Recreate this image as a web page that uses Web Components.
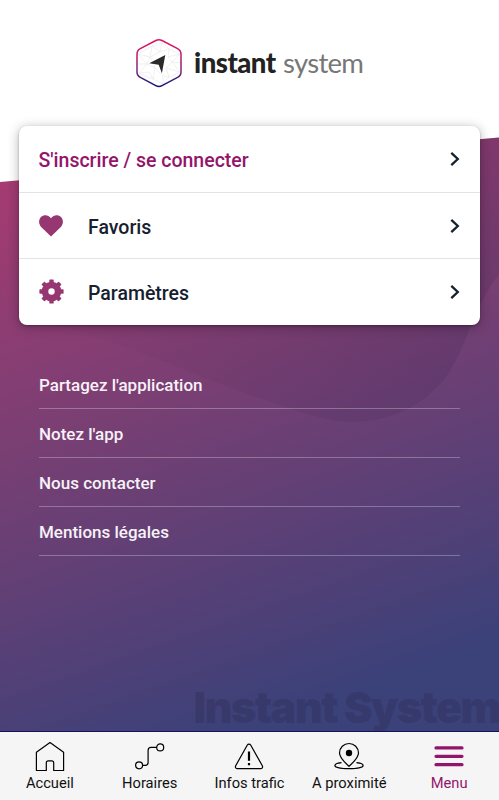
<!DOCTYPE html>
<html lang="fr">
<head>
<meta charset="utf-8">
<title>Menu</title>
<style>
    body {
        margin: 0;
        font-family: Roboto, sans-serif;
    }
</style>
</head>
<body>
<app-screen>
    <brand-logo slot="header"></brand-logo>
    <menu-card>
        <menu-row accent>S'inscrire / se connecter</menu-row>
        <menu-row icon="heart">Favoris</menu-row>
        <menu-row icon="gear">Paramètres</menu-row>
    </menu-card>
    <link-list>
        <link-item>Partagez l'application</link-item>
        <link-item>Notez l'app</link-item>
        <link-item>Nous contacter</link-item>
        <link-item>Mentions légales</link-item>
    </link-list>
    <water-mark slot="footer">Instant System</water-mark>
    <tab-bar slot="tabs">
        <tab-item icon="home">Accueil</tab-item>
        <tab-item icon="route">Horaires</tab-item>
        <tab-item icon="alert">Infos trafic</tab-item>
        <tab-item icon="pin">A proximité</tab-item>
        <tab-item icon="menu" active>Menu</tab-item>
    </tab-bar>
</app-screen>

<script>
const ICONS = {
    heart: /*html*/ `
        <svg width="24" height="24" viewBox="0 0 24 24" fill="#963772">
            <path d="M12 22.600 2.400 13.200C-.6 10.200-.6 5.600 2 3 4.700.400 9.300.500 12 4.200 14.700.500 19.300.400 22 3c2.600 2.600 2.600 7.200-.4 10.200Z"/>
        </svg>`,
    gear: /*html*/ `
        <svg width="25" height="25" viewBox="-12.500 -12.500 25 25" fill="#963772">
            <rect x="-2.200" y="-12.100" width="4.400" height="24.200" rx=".7"/>
            <rect x="-2.200" y="-12.100" width="4.400" height="24.200" rx=".7" transform="rotate(45)"/>
            <rect x="-2.200" y="-12.100" width="4.400" height="24.200" rx=".7" transform="rotate(90)"/>
            <rect x="-2.200" y="-12.100" width="4.400" height="24.200" rx=".7" transform="rotate(135)"/>
            <circle r="9.800"/>
            <circle r="3.200" fill="#fff"/>
        </svg>`,
    home: /*html*/ `
        <svg width="30" height="32" viewBox="0 0 30 32" fill="none" stroke="#000" stroke-width="1.200" stroke-linejoin="round">
            <path d="M1.400 11.200 15 1.500l13.600 9.700v18.300H18.700v-7.700c0-1.400-.6-2-2-2h-3.400c-1.400 0-2 .6-2 2v7.700H1.400Z"/>
        </svg>`,
    route: /*html*/ `
        <svg width="30" height="32" viewBox="0 0 30 32" fill="none" stroke="#000" stroke-width="1.200">
            <circle cx="25.200" cy="6.400" r="3.500"/>
            <circle cx="4.100" cy="24.300" r="3.500"/>
            <path d="M21.700 6.400H16c-2 0-2.900.9-2.900 2.900v12.200c0 2-.9 2.800-2.800 2.800H7.600"/>
        </svg>`,
    alert: /*html*/ `
        <svg width="30" height="32" viewBox="0 0 30 32" fill="none" stroke="#000" stroke-width="1.200">
            <path d="M13.200 4.200c.9-1.500 2.700-1.500 3.600 0l11.500 20.500c.8 1.500 0 2.900-1.800 2.900h-23c-1.800 0-2.600-1.400-1.800-2.900Z"/>
            <path d="M15 10.500v9.300M15 22v2.300" stroke-width="2.200"/>
        </svg>`,
    pin: /*html*/ `
        <svg width="30" height="32" viewBox="0 0 30 32" fill="none" stroke="#000" stroke-width="1.200">
            <path d="M15 25.300C11 21.700 5.500 16.800 5.500 12a9.500 9.500 0 0 1 19 0c0 4.800-5.500 9.700-9.500 13.300Z"/>
            <circle cx="15" cy="12" r="3.200" fill="#000" stroke="none"/>
            <path d="M7.500 21.700C3.800 22.100.9 23 .9 24.400c0 1.900 6.300 3.200 14.100 3.200s14.100-1.300 14.100-3.200c0-1.400-2.900-2.300-6.600-2.700"/>
        </svg>`,
    menu: /*html*/ `
        <svg width="30" height="32" viewBox="0 0 30 32" stroke="#93156b" stroke-width="3.200" stroke-linecap="round">
            <path d="M2 6.900h26M2 15.300h26M2 23.700h26"/>
        </svg>`
}

class AppScreen extends HTMLElement {
    constructor() {
        super()
        this.attachShadow({ mode: 'open' }).innerHTML = /*html*/ `
            <style>
                :host {
                    display: flex;
                    flex-direction: column;
                    position: relative;
                    z-index: 0;
                    height: 800px;
                    overflow: hidden;
                    background: #fff;
                }
                .backdrop {
                    position: absolute;
                    inset: 0;
                    z-index: -1;
                }
                header {
                    height: 125.500px;
                    box-sizing: border-box;
                    padding: 37px 0 0 134px;
                }
                main {
                    flex: 1;
                    padding: 0 19px;
                }
            </style>
            <svg class="backdrop" width="499" height="800" viewBox="0 0 499 800">
                <defs>
                    <linearGradient id="bg" gradientUnits="userSpaceOnUse" x1="0" y1="183" x2="200" y2="746">
                        <stop offset="0" stop-color="#a53b72"/>
                        <stop offset=".43" stop-color="#793f73"/>
                        <stop offset="1" stop-color="#3b4179"/>
                    </linearGradient>
                    <linearGradient id="wave" x1="0" y1="0" x2="1" y2="0">
                        <stop offset="0" stop-color="#3c2350" stop-opacity="0"/>
                        <stop offset="1" stop-color="#3c2350" stop-opacity=".2"/>
                    </linearGradient>
                </defs>
                <path d="M0 182 499 137.500V800H0Z" fill="url(#bg)"/>
                <path d="M0 313C85 325 170 366 250 395 290 408 322 422 353 422 390 422 428 405 450 371 468 342 478 298 499 275V137.500L0 182Z" fill="url(#wave)"/>
            </svg>
            <header><slot name="header"></slot></header>
            <main><slot></slot></main>
            <slot name="footer"></slot>
            <slot name="tabs"></slot>
        `
    }
}

class BrandLogo extends HTMLElement {
    constructor() {
        super()
        this.attachShadow({ mode: 'open' }).innerHTML = /*html*/ `
            <style>
                :host {
                    display: grid;
                    grid-template-columns: 60px 89px auto;
                    align-items: center;
                    font-family: Lato, sans-serif;
                    font-size: 27.500px;
                    line-height: 52px;
                    color: #777;
                }
                b {
                    color: #222;
                    font-weight: 900;
                    letter-spacing: -.5px;
                }
                span {
                    letter-spacing: -.7px;
                }
            </style>
            <svg width="50" height="52" viewBox="0 0 50 52" fill="none">
                <defs>
                    <linearGradient id="edge" x1="0" y1="0" x2="0" y2="1">
                        <stop offset="0" stop-color="#e3125f"/>
                        <stop offset=".35" stop-color="#bd1766"/>
                        <stop offset=".65" stop-color="#792a7b"/>
                        <stop offset="1" stop-color="#161078"/>
                    </linearGradient>
                </defs>
                <path d="M4 17 18 9 28 6 35 12 46 17 38 25 46 35 35 40 29 47 19 42 5 36 13 27ZM4 17 16 20 13 27 3 27M18 9 16 20 26 15 35 12 34 20 38 25M26 15 18 9M26 15 28 6M16 20 21 31 13 27M19 42 21 31 29 39 35 40M5 36 15 35 19 42M29 39 29 47M38 25 32 31 35 40M34 20 46 17M38 25 47 26M32 31 46 35" stroke="#e9e9e9" stroke-width=".7"/>
                <path d="M21.800 3.500c2-1.100 4.200-1.100 6.200 0l15.600 8.200c2.300 1.200 3.400 3 3.400 5.500V35c0 2.500-1.100 4.200-3.400 5.400L28 48.700c-2 1.100-4.200 1.100-6.200 0L6.300 40.400C4 39.200 3 37.500 3 35V17.200c0-2.500 1-4.300 3.300-5.500Z" stroke="url(#edge)" stroke-width="1.500"/>
                <path d="M31.300 18 15.200 26.200 24.700 27.800 27.900 36.300Z" fill="#292929"/>
            </svg>
            <b>instant</b><span>system</span>
        `
    }
}

class MenuCard extends HTMLElement {
    constructor() {
        super()
        this.attachShadow({ mode: 'open' }).innerHTML = /*html*/ `
            <style>
                :host {
                    display: block;
                    border-radius: 8px;
                    background: #fff;
                    box-shadow: 0 2px 12px rgba(0, 0, 0, .3), 0 1px 2px rgba(40, 0, 40, .3);
                }
                ::slotted(menu-row:not(:first-child)) {
                    border-top: 1px solid #e3e3e3;
                }
            </style>
            <slot></slot>
        `
    }
}

class MenuRow extends HTMLElement {
    constructor() {
        super()
        const icon = this.getAttribute('icon')
        this.attachShadow({ mode: 'open' }).innerHTML = /*html*/ `
            <style>
                :host {
                    display: flex;
                    align-items: center;
                    box-sizing: border-box;
                    height: 66.400px;
                    padding: 0 19px 0 19.500px;
                    font-size: 19.500px;
                    font-weight: 500;
                    color: #17202f;
                }
                :host([accent]) {
                    color: #93156b;
                }
                .icon {
                    display: flex;
                    width: 49.500px;
                }
                .label {
                    flex: 1;
                    padding-top: 3px;
                }
            </style>
            ${icon ? `<span class="icon">${ICONS[icon]}</span>` : ''}
            <span class="label"><slot></slot></span>
            <svg width="12" height="16" viewBox="0 0 12 16" fill="none" stroke="#17202f" stroke-width="2.300">
                <path d="M2.300 1.900 8.800 8 2.300 14.100"/>
            </svg>
        `
    }
}

class LinkList extends HTMLElement {
    constructor() {
        super()
        this.attachShadow({ mode: 'open' }).innerHTML = /*html*/ `
            <style>
                :host {
                    display: block;
                    padding: 35.500px 20px 0;
                }
            </style>
            <slot></slot>
        `
    }
}

class LinkItem extends HTMLElement {
    constructor() {
        super()
        this.attachShadow({ mode: 'open' }).innerHTML = /*html*/ `
            <style>
                :host {
                    display: flex;
                    align-items: center;
                    box-sizing: border-box;
                    height: 49px;
                    padding-top: 2px;
                    border-bottom: 1px solid rgba(255, 255, 255, .28);
                    font-size: 17px;
                    font-weight: 500;
                    color: #f7f2f7;
                }
            </style>
            <slot></slot>
        `
    }
}

class WaterMark extends HTMLElement {
    constructor() {
        super()
        this.attachShadow({ mode: 'open' }).innerHTML = /*html*/ `
            <style>
                :host {
                    display: block;
                    height: 47px;
                    padding-left: 193.500px;
                    font: 900 43px/46px Inter, sans-serif;
                    letter-spacing: -1.500px;
                    white-space: nowrap;
                    color: rgba(45, 45, 85, .4);
                }
            </style>
            <slot></slot>
        `
    }
}

class TabBar extends HTMLElement {
    constructor() {
        super()
        this.attachShadow({ mode: 'open' }).innerHTML = /*html*/ `
            <style>
                :host {
                    display: grid;
                    grid-template-columns: repeat(5, 1fr);
                    box-sizing: border-box;
                    height: 69px;
                    border-top: 1px solid #17105f;
                    background: #f5f5f5;
                }
            </style>
            <slot></slot>
        `
    }
}

class TabItem extends HTMLElement {
    constructor() {
        super()
        this.attachShadow({ mode: 'open' }).innerHTML = /*html*/ `
            <style>
                :host {
                    display: flex;
                    flex-direction: column;
                    align-items: center;
                    padding-top: 9px;
                    font-size: 14.700px;
                    line-height: 20px;
                    white-space: nowrap;
                    color: #111;
                }
                :host([active]) {
                    color: #93156b;
                }
            </style>
            ${ICONS[this.getAttribute('icon')]}
            <span><slot></slot></span>
        `
    }
}

customElements.define('app-screen', AppScreen)
customElements.define('brand-logo', BrandLogo)
customElements.define('menu-card', MenuCard)
customElements.define('menu-row', MenuRow)
customElements.define('link-list', LinkList)
customElements.define('link-item', LinkItem)
customElements.define('water-mark', WaterMark)
customElements.define('tab-bar', TabBar)
customElements.define('tab-item', TabItem)
</script>
</body>
</html>
